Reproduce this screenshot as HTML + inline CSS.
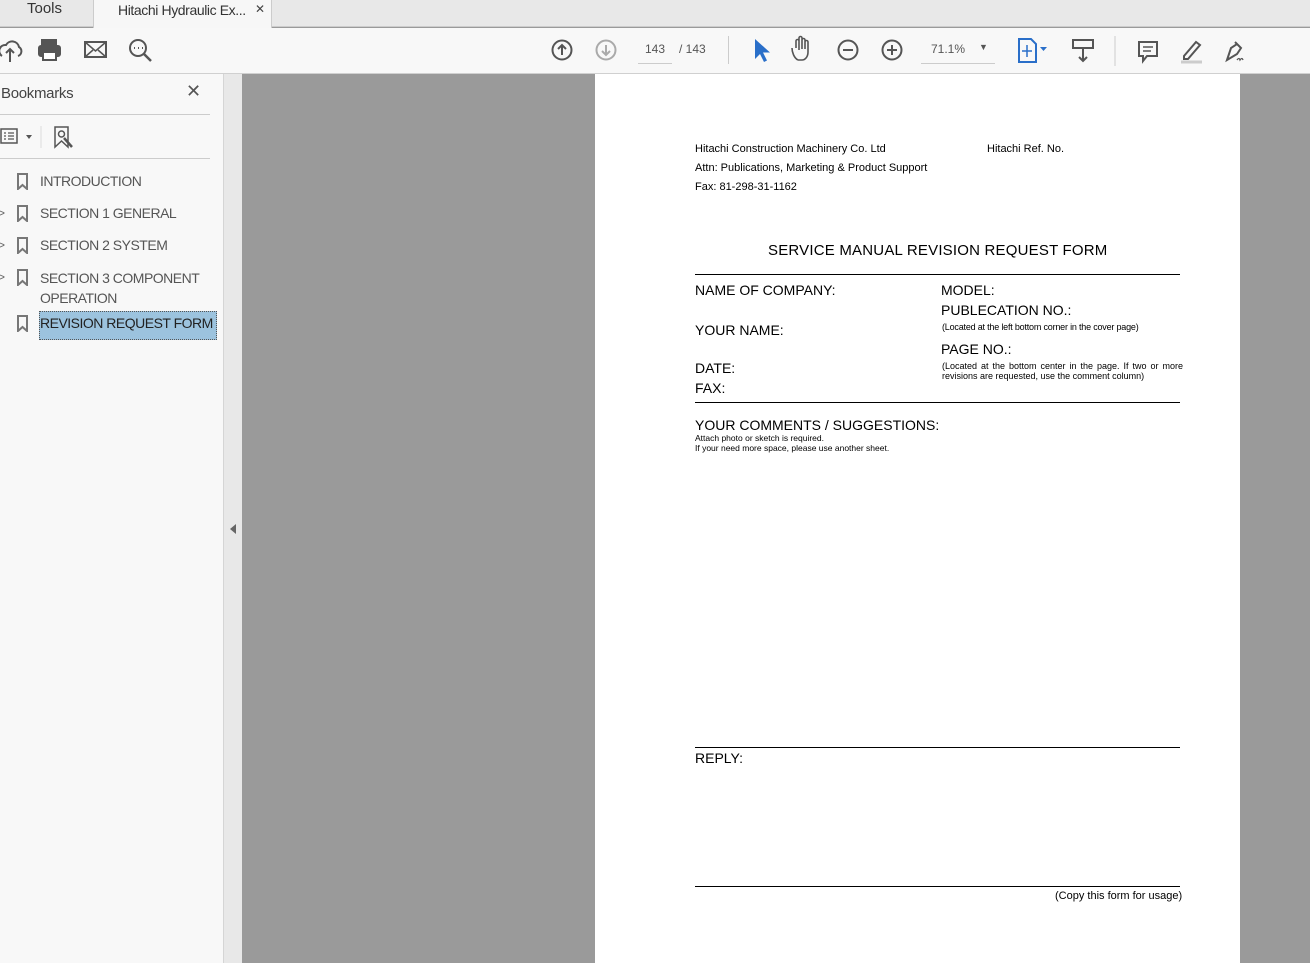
<!DOCTYPE html>
<html><head><meta charset="utf-8"><style>
*{margin:0;padding:0;box-sizing:border-box}
body{width:1310px;height:963px;overflow:hidden;position:relative;font-family:"Liberation Sans",sans-serif;background:#9a9a9a}
.a{position:absolute}
.p{position:absolute;color:#000;white-space:nowrap;font-family:"Liberation Sans",sans-serif}
.bm{position:absolute;left:40px;font-size:14px;letter-spacing:-0.5px;color:#555;font-family:"Liberation Sans",sans-serif}
.bi{position:absolute;left:17px;width:11px;height:17px}
.ch{position:absolute;left:-2px;font-size:12px;color:#666}
</style></head><body>
<div class="a" style="left:0;top:0;width:1310px;height:27px;background:#e8e8e8;border-bottom:1px solid #ccc"></div>
<div class="a" style="left:27px;top:0;font-size:15px;color:#333">Tools</div>
<div class="a" style="left:93px;top:0;width:179px;height:28px;background:#f7f7f7;border-left:1px solid #ccc;border-right:1px solid #ccc"></div>
<div class="a" style="left:118px;top:2px;font-size:14px;letter-spacing:-0.4px;color:#333">Hitachi Hydraulic Ex...</div>
<div class="a" style="left:255px;top:2px;font-size:12px;color:#444">✕</div>
<div class="a" style="left:0;top:28px;width:1310px;height:46px;background:#f8f8f8;border-bottom:1px solid #d0d0d0"></div>
<svg class="a" style="left:0;top:36px" width="160" height="30" fill="none" stroke="#555" stroke-width="2">
<path d="M2 20 a6 6 0 0 1 4-11 a7 7 0 0 1 13 2 a5 5 0 0 1 -1 9"/><path d="M10 26 V13 M6 17 l4-4 4 4"/>
<rect x="42" y="4" width="14" height="6" fill="#555"/><rect x="39" y="10" width="21" height="10" rx="2" fill="#555"/><rect x="43" y="16" width="13" height="8" fill="#fff"/>
<rect x="85" y="6" width="21" height="15"/><path d="M85 6 l10.5 9 10.5-9 M85 21 l8-7 M106 21 l-8-7" stroke-width="1.5"/>
<circle cx="138" cy="12" r="8"/><path d="M144 18 l7 7" stroke-width="2.5"/><path d="M134 12h1M138 12h1M142 12h1" stroke-width="2"/>
</svg>
<svg class="a" style="left:550px;top:36px" width="70" height="28" fill="none" stroke-width="2">
<circle cx="12" cy="14" r="9.5" stroke="#555"/><path d="M12 19V9 M8 13l4-4 4 4" stroke="#555"/>
<circle cx="56" cy="14" r="9.5" stroke="#aaa"/><path d="M56 9v10 M52 15l4 4 4-4" stroke="#aaa"/>
</svg>
<div class="a" style="left:638px;top:42px;width:34px;height:22px;border-bottom:1px solid #ccc;font-size:12px;color:#555;text-align:center">143</div>
<div class="a" style="left:679px;top:42px;font-size:12px;color:#555">/ 143</div>
<div class="a" style="left:728px;top:36px;width:1px;height:28px;background:#ccc"></div>
<svg class="a" style="left:748px;top:34px" width="320" height="32" fill="none" stroke="#555" stroke-width="2">
<path d="M7 5 v20 l5-5 4 8 3-1.5 -4-8 h7z" fill="#2a6fc9" stroke="none"/>
<path d="M50 26 c-4-2-6-8-6-12 M48 14 v-7 a1.5 1.5 0 0 1 3 0 v9 M51 7 v-3 a1.5 1.5 0 0 1 3 0 v11 M54 6 a1.5 1.5 0 0 1 3 0 v9 M57 8 a1.5 1.5 0 0 1 3 0 v10 c0 5 -3 8 -6 8 h-4" stroke-width="1.6"/>
<circle cx="100" cy="16" r="9.5"/><path d="M95 16h10"/>
<circle cx="144" cy="16" r="9.5"/><path d="M139 16h10 M144 11v10"/>
</svg>
<div class="a" style="left:921px;top:42px;width:74px;height:22px;border-bottom:1px solid #ccc;font-size:12px;color:#555;padding-left:10px">71.1%<span style="position:absolute;left:58px;top:0;font-size:9px">▼</span></div>
<svg class="a" style="left:1015px;top:36px" width="240" height="30" fill="none" stroke-width="2">
<path d="M4 3 h12 l5 5 v18 h-17z" stroke="#2a6fc9"/><path d="M12 9v12 M7 15h10" stroke="#2a6fc9" stroke-width="1.5"/><path d="M25 11h7l-3.5 4z" fill="#2a6fc9" stroke="none"/>
<rect x="58" y="4" width="20" height="8" stroke="#555"/><path d="M68 12v13 M64 21l4 4 4-4" stroke="#555"/>
<path d="M100 -2v32" stroke="#ccc" stroke-width="1"/>
<path d="M124 6h18v14h-10l-4 5v-5h-4z" stroke="#555"/><path d="M128 11h10M128 15h8" stroke="#555" stroke-width="1.5"/>
<path d="M169 20l12-14 4 3-12 14h-4z" stroke="#555"/><path d="M166 26h21" stroke="#ccc" stroke-width="3"/>
<path d="M212 24l4-12 6-4 4 4-4 6-10 6z M220 6l6 6" stroke="#555"/><path d="M222 24q2-3 3 0 q2-3 3 0" stroke="#555" stroke-width="1.3"/>
</svg>
<div class="a" style="left:0;top:74px;width:223px;height:889px;background:#f8f8f8"></div>
<div class="a" style="left:223px;top:74px;width:19px;height:889px;background:#e8e8e8;border-left:1px solid #d5d5d5"></div>
<div class="a" style="left:230px;top:524px;width:0;height:0;border-top:5px solid transparent;border-bottom:5px solid transparent;border-right:6px solid #666"></div>
<div class="a" style="left:1px;top:85px;font-size:15px;letter-spacing:-0.3px;color:#444">Bookmarks</div>
<div class="a" style="left:186px;top:81px;font-size:18px;color:#555">✕</div>
<div class="a" style="left:0;top:114px;width:210px;height:1px;background:#ccc"></div>
<svg class="a" style="left:0;top:124px" width="80" height="26" fill="none" stroke="#555" stroke-width="1.5">
<rect x="1" y="5" width="16" height="14"/><path d="M4 9h2M4 12h2M4 15h2M8 9h6M8 12h6M8 15h6" stroke-width="1.3"/><path d="M26 11h6l-3 4z" fill="#555" stroke="none"/>
<path d="M41 2v22" stroke="#ddd" stroke-width="1"/>
<path d="M55 3h13v20l-6.5-6-6.5 6z"/><circle cx="61.5" cy="10" r="3"/><path d="M64 14l8 9" stroke-width="2.5"/>
</svg>
<div class="a" style="left:0;top:158px;width:210px;height:1px;background:#ccc"></div>
<svg class="bi" style="top:173px" viewBox="0 0 11 17"><path d="M1 1h9v15l-4.5-4-4.5 4z" fill="none" stroke="#777" stroke-width="2"/></svg>
<div class="bm" style="top:173px">INTRODUCTION</div>
<div class="ch" style="top:206px">&gt;</div><svg class="bi" style="top:205px" viewBox="0 0 11 17"><path d="M1 1h9v15l-4.5-4-4.5 4z" fill="none" stroke="#777" stroke-width="2"/></svg>
<div class="bm" style="top:205px">SECTION 1 GENERAL</div>
<div class="ch" style="top:238px">&gt;</div><svg class="bi" style="top:237px" viewBox="0 0 11 17"><path d="M1 1h9v15l-4.5-4-4.5 4z" fill="none" stroke="#777" stroke-width="2"/></svg>
<div class="bm" style="top:237px">SECTION 2 SYSTEM</div>
<div class="ch" style="top:270px">&gt;</div><svg class="bi" style="top:269px" viewBox="0 0 11 17"><path d="M1 1h9v15l-4.5-4-4.5 4z" fill="none" stroke="#777" stroke-width="2"/></svg>
<div class="bm" style="top:268px;line-height:20px">SECTION 3 COMPONENT<br>OPERATION</div>
<svg class="bi" style="top:315px" viewBox="0 0 11 17"><path d="M1 1h9v15l-4.5-4-4.5 4z" fill="none" stroke="#777" stroke-width="2"/></svg>
<div class="a" style="left:39px;top:311px;width:178px;height:29px;background:#9cc3de;border:1px dotted #555"></div>
<div class="bm" style="top:315px;color:#222">REVISION REQUEST FORM</div>
<div class="a" style="left:595px;top:74px;width:645px;height:889px;background:#fff"></div>
<div class="p" style="left:695px;top:143px;font-size:11px">Hitachi Construction Machinery Co. Ltd</div>
<div class="p" style="left:987px;top:143px;font-size:11px">Hitachi Ref. No.</div>
<div class="p" style="left:695px;top:162px;font-size:11px">Attn: Publications, Marketing &amp; Product Support</div>
<div class="p" style="left:695px;top:181px;font-size:11px">Fax: 81-298-31-1162</div>
<div class="p" style="left:768px;top:242px;font-size:15px;letter-spacing:0.2px">SERVICE MANUAL REVISION REQUEST FORM</div>
<div class="a" style="left:695px;top:274px;width:485px;height:1px;background:#000"></div>
<div class="p" style="left:695px;top:282px;font-size:14px">NAME OF COMPANY:</div>
<div class="p" style="left:941px;top:282px;font-size:14px">MODEL:</div>
<div class="p" style="left:941px;top:302px;font-size:14px">PUBLECATION NO.:</div>
<div class="p" style="left:942px;top:322px;font-size:9px;letter-spacing:-0.2px">(Located at the left bottom corner in the cover page)</div>
<div class="p" style="left:695px;top:322px;font-size:14px">YOUR NAME:</div>
<div class="p" style="left:941px;top:341px;font-size:14px">PAGE NO.:</div>
<div class="p" style="left:942px;top:361px;font-size:9px;line-height:10px;width:241px;white-space:normal;text-align:justify;text-align-last:left">(Located at the bottom center in the page. If two or more revisions are requested, use the comment column)</div>
<div class="p" style="left:695px;top:360px;font-size:14px">DATE:</div>
<div class="p" style="left:695px;top:380px;font-size:14px">FAX:</div>
<div class="a" style="left:695px;top:402px;width:485px;height:1px;background:#000"></div>
<div class="p" style="left:695px;top:417px;font-size:14px">YOUR COMMENTS / SUGGESTIONS:</div>
<div class="p" style="left:695px;top:433px;font-size:8.5px;line-height:10px">Attach photo or sketch is required.<br>If your need more space, please use another sheet.</div>
<div class="a" style="left:695px;top:747px;width:485px;height:1px;background:#000"></div>
<div class="p" style="left:695px;top:750px;font-size:14px">REPLY:</div>
<div class="a" style="left:695px;top:886px;width:485px;height:1px;background:#000"></div>
<div class="p" style="left:1055px;top:890px;font-size:11px">(Copy this form for usage)</div>
</body></html>
